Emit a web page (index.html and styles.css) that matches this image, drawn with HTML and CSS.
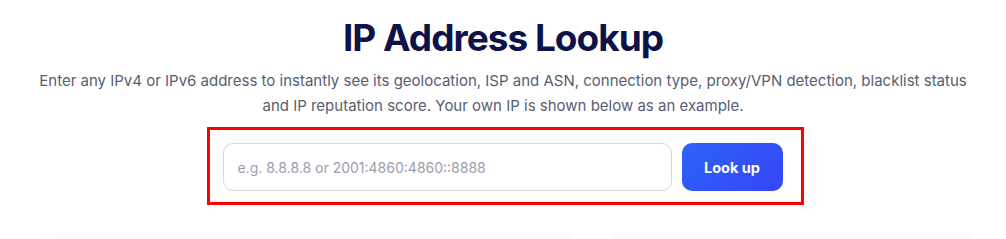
FILE: index.html
```html
<!DOCTYPE html>
<html lang="en">
<head>
    <meta charset="UTF-8">
    <meta name="viewport" content="width=device-width, initial-scale=1.0">
    <title>IP Address Lookup</title>
    <link rel="stylesheet" href="styles.css">
</head>
<body>
    <section class="hero">
        <h1>IP Address Lookup</h1>
        <p class="intro">Enter any IPv4 or IPv6 address to instantly see its geolocation, ISP and ASN, connection type, proxy/VPN detection, blacklist status and IP reputation score. Your own IP is shown below as an example.</p>

        <div class="highlight">
            <form class="lookup-form" onsubmit="return false;">
                <input type="text" placeholder="e.g. 8.8.8.8 or 2001:4860:4860::8888">
                <button type="submit">Look up</button>
            </form>
        </div>
    </section>

    <section class="results">
        <div class="card card-wide"></div>
        <div class="card"></div>
    </section>
</body>
</html>
```

FILE: styles.css
```css
body {
    margin: 0;
    background-color: #ffffff;
    font-family: Inter, "Noto Sans", sans-serif;
    color: #0e1249;
    overflow: hidden;
}

.hero {
    display: flex;
    flex-direction: column;
    align-items: center;
    padding-top: 14px;
}

h1 {
    margin: 0;
    font-size: 37px;
    line-height: 48px;
    font-weight: 700;
    color: #0e1249;
    letter-spacing: -1px;
}

.intro {
    margin: 6px 0 0;
    max-width: 940px;
    text-align: center;
    font-size: 15px;
    line-height: 25px;
    color: #585d72;
}

.highlight {
    margin: 9px 0 0 4px;
    padding: 13px 18px 11px 13px;
    border: 3px solid #ff0000;
}

.lookup-form {
    display: flex;
    gap: 10px;
}

.lookup-form input {
    width: 449px;
    height: 48px;
    box-sizing: border-box;
    padding: 0 14px;
    border: 1px solid #d6d7de;
    border-radius: 10px;
    font-family: inherit;
    font-size: 14px;
    color: #0e1249;
    outline: none;
}

.lookup-form input::placeholder {
    color: #9b9dad;
}

.lookup-form button {
    width: 101px;
    height: 48px;
    border: none;
    border-radius: 10px;
    background: linear-gradient(135deg, #2e62f8, #3446f6);
    color: #ffffff;
    font-family: inherit;
    font-size: 14.5px;
    font-weight: 700;
    cursor: pointer;
}

.results {
    display: flex;
    gap: 36px;
    padding: 28px 32px 0 45px;
}

.card {
    flex: 1;
    height: 40px;
    background-color: #fcfcfd;
    border-radius: 12px;
    box-shadow: 0 1px 4px rgba(20, 20, 60, 0.03);
}

.card-wide {
    flex: 1.45;
}
```
